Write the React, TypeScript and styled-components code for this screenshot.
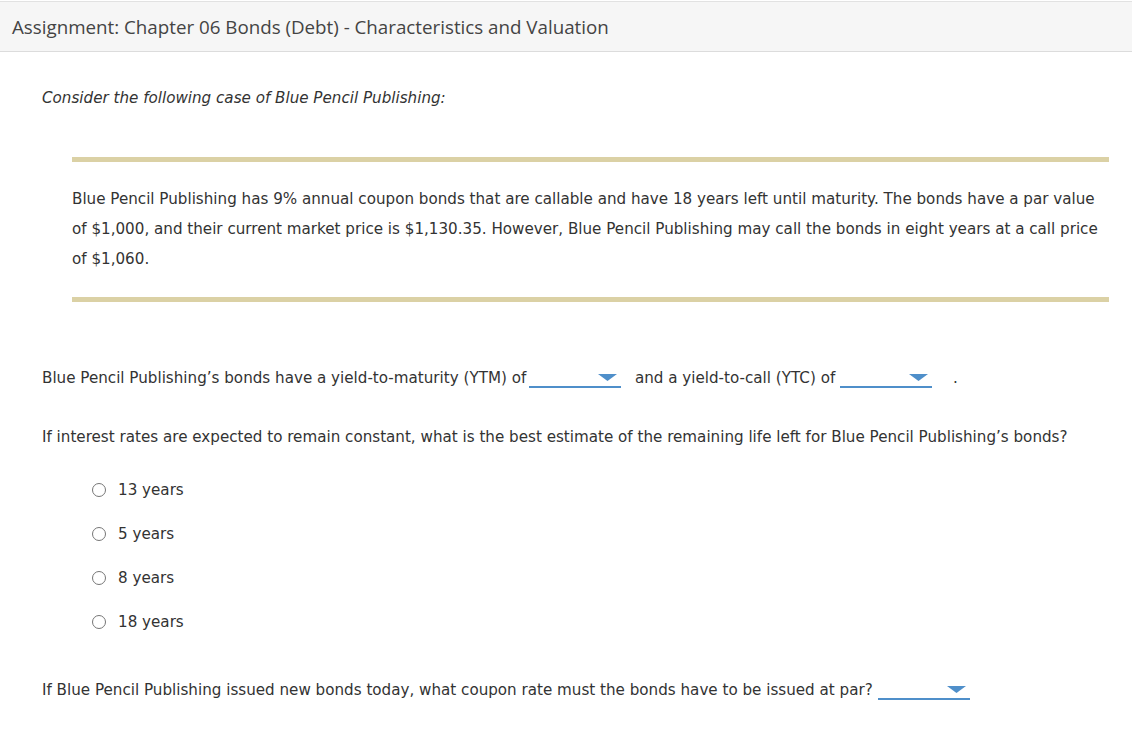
import styled, { createGlobalStyle } from "styled-components";

const GlobalStyle = createGlobalStyle`
    html, body {
        margin: 0;
        padding: 0;
        background: #fff;
    }
    body {
        font-family: "DejaVu Sans", Verdana, sans-serif;
        font-size: 15.15px;
        color: #333;
    }
`;

const Page = styled.div`
    width: 1132px;
    min-height: 730px;
    padding-top: 1px;
`;

const Header = styled.div`
    height: 49px;
    display: flex;
    align-items: center;
    padding-left: 12px;
    background: #f6f6f6;
    border-top: 1px solid #e2e2e2;
    border-bottom: 1px solid #dcdcdc;
    font-family: "Open Sans", "Liberation Sans", sans-serif;
    font-size: 18.75px;
    color: #444;
`;

const Content = styled.div`
    padding: 36px 23px 0 42px;
`;

const Intro = styled.p`
    margin: 0;
    font-style: italic;
    line-height: 20px;
    color: #333;
`;

const Passage = styled.div`
    margin: 49px 0 0 30px;
    border-top: 5px solid #dbd1a5;
    border-bottom: 5px solid #dbd1a5;
    padding: 22px 10px 23px 0;
`;

const Line = styled.p`
    margin: 0;
    line-height: 30px;
`;

const Question = styled.p<{ $top: number }>`
    margin: ${({ $top }) => $top}px 0 0;
    line-height: 20px;
    white-space: nowrap;
`;

const Select = styled.span<{ $after?: number; $before?: number }>`
    display: inline-block;
    box-sizing: border-box;
    width: 92px;
    height: 14px;
    vertical-align: -5px;
    margin-left: ${({ $before }) => $before ?? 0}px;
    margin-right: ${({ $after }) => $after ?? 0}px;
    border-bottom: 2px solid #4f8fca;
`;

const Caret = styled.svg`
    display: block;
    width: 19px;
    height: 7px;
    margin: 0 4px 0 auto;
`;

const Period = styled.span`
    margin-left: 21px;
`;

const Options = styled.div`
    margin: 33px 0 0 50px;
    display: flex;
    flex-direction: column;
    gap: 24px;
`;

const Option = styled.label`
    display: flex;
    align-items: center;
    height: 20px;
    gap: 12px;
    color: #333;
`;

const Radio = styled.span`
    width: 14px;
    height: 14px;
    border-radius: 50%;
    border: 1px solid #767676;
    box-sizing: border-box;
`;

function Dropdown({ after, before }: { after?: number; before?: number }) {
    return (
        <Select $after={after} $before={before}>
            <Caret viewBox="0 0 19 7">
                <path d="M0 0 H19 L9.5 7 Z" fill="#4f8fca" />
            </Caret>
        </Select>
    );
}

const answers = ["13 years", "5 years", "8 years", "18 years"];

export default function App() {
    return (
        <Page>
            <GlobalStyle />
            <Header>Assignment: Chapter 06 Bonds (Debt) - Characteristics and Valuation</Header>
            <Content>
                <Intro>Consider the following case of Blue Pencil Publishing:</Intro>
                <Passage>
                    <Line>
                        Blue Pencil Publishing has 9% annual coupon bonds that are callable and have 18 years left until maturity. The bonds have a par value of $1,000, and their current market price is $1,130.35. However, Blue Pencil Publishing may call the bonds in eight years at a call price of $1,060.
                    </Line>
                </Passage>
                <Question $top={66}>
                    Blue Pencil Publishing’s bonds have a yield-to-maturity (YTM) of <Dropdown before={-2} after={9} /> and a yield-to-call (YTC) of <Dropdown />
                    <Period>.</Period>
                </Question>
                <Question $top={39}>
                    If interest rates are expected to remain constant, what is the best estimate of the remaining life left for Blue Pencil Publishing’s bonds?
                </Question>
                <Options>
                    {answers.map((a) => (
                        <Option key={a}>
                            <Radio />
                            {a}
                        </Option>
                    ))}
                </Options>
                <Question $top={48}>
                    If Blue Pencil Publishing issued new bonds today, what coupon rate must the bonds have to be issued at par? <Dropdown />
                </Question>
            </Content>
        </Page>
    );
}
